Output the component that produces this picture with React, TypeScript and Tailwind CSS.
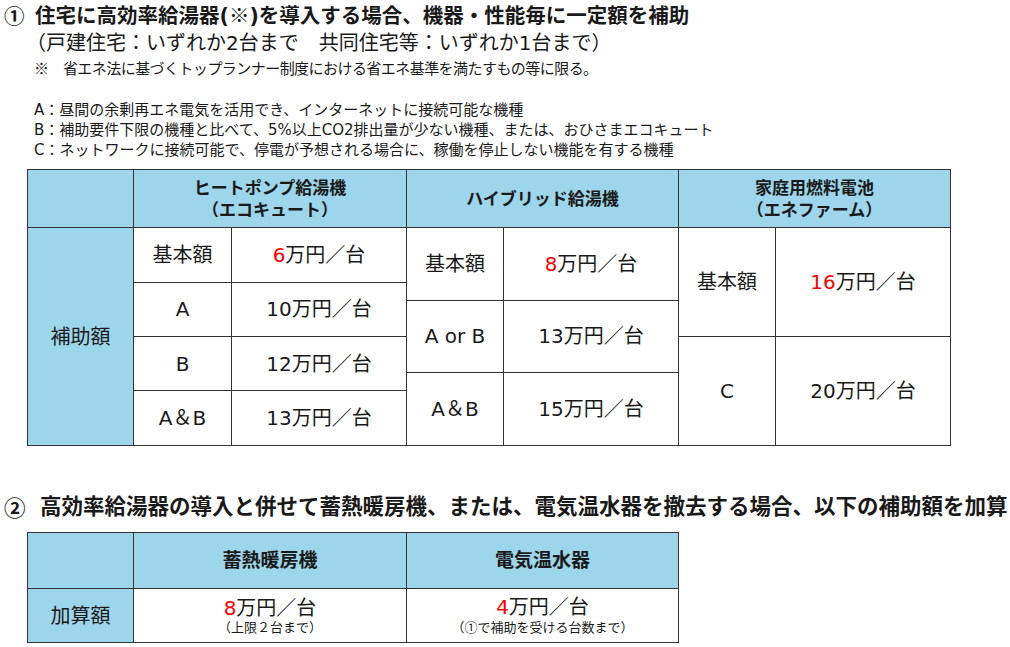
import React from "react";

const FONT = { fontFamily: '"DejaVu Sans", "Noto Sans CJK JP", sans-serif' };
const CJK = { fontFamily: '"Noto Sans CJK JP", sans-serif' };

const Red = ({ children }: { children: React.ReactNode }) => (
  <span className="text-[#ff0000]">{children}</span>
);

export default function App() {
  const cell = "bg-white flex items-center justify-center text-[20px] text-[#1a1a1a]";
  const head = "bg-[#9dd5ea] flex flex-col items-center justify-center font-bold text-[#1a1a1a]";
  return (
    <div className="w-[1010px] h-[647px] bg-white overflow-hidden text-[#1a1a1a]" style={FONT}>
      <div className="pt-[3px]">
        <div className="flex items-center h-[24px] text-[20.5px] font-bold leading-[24px]">
          <span className="w-[35px] pl-[4px]" style={CJK}>①</span>
          <span>住宅に高効率給湯器(<span style={CJK}>※</span>)を導入する場合、機器・性能毎に一定額を補助</span>
        </div>
        <div className="mt-[4px] pl-[26px] h-[24px] text-[20px] leading-[24px]">
          （戸建住宅：いずれか2台まで　共同住宅等：いずれか1台まで）
        </div>
        <div className="mt-[3px] pl-[34px] h-[20px] text-[15px] leading-[20px] tracking-[-0.55px]">
          <span style={CJK}>※</span>　省エネ法に基づくトップランナー制度における省エネ基準を満たすもの等に限る。
        </div>
        <div className="mt-[22px] pl-[34px] text-[15px] leading-[20px]">
          <div>A：昼間の余剰再エネ電気を活用でき、インターネットに接続可能な機種</div>
          <div>B：補助要件下限の機種と比べて、5%以上CO2排出量が少ない機種、または、おひさまエコキュート</div>
          <div>C：ネットワークに接続可能で、停電が予想される場合に、稼働を停止しない機能を有する機種</div>
        </div>

        <div className="mt-[9px] ml-[27px] w-fit grid grid-cols-[105px_97px_174px_96px_174px_96px_174px] grid-rows-[57px_repeat(12,minmax(0,1fr))] h-[277px] gap-px p-px bg-[#333]">
          <div className={`${head} col-start-1 row-start-1`} />
          <div className={`${head} col-start-2 col-span-2 row-start-1 text-[17px] leading-[22px]`}>
            <span>ヒートポンプ給湯機</span>
            <span>（エコキュート）</span>
          </div>
          <div className={`${head} col-start-4 col-span-2 row-start-1 text-[17px] leading-[22px]`}>
            <span>ハイブリッド給湯機</span>
          </div>
          <div className={`${head} col-start-6 col-span-2 row-start-1 text-[17px] leading-[22px]`}>
            <span>家庭用燃料電池</span>
            <span>（エネファーム）</span>
          </div>

          <div className="bg-[#9dd5ea] flex items-center justify-center text-[20px] col-start-1 row-start-2 row-span-12">補助額</div>

          <div className={`${cell} col-start-2 row-start-2 row-span-3`}>基本額</div>
          <div className={`${cell} col-start-3 row-start-2 row-span-3`}><span><Red>6</Red>万円／台</span></div>
          <div className={`${cell} col-start-2 row-start-5 row-span-3`}>A</div>
          <div className={`${cell} col-start-3 row-start-5 row-span-3`}>10万円／台</div>
          <div className={`${cell} col-start-2 row-start-8 row-span-3`}>B</div>
          <div className={`${cell} col-start-3 row-start-8 row-span-3`}>12万円／台</div>
          <div className={`${cell} col-start-2 row-start-11 row-span-3`}>A＆B</div>
          <div className={`${cell} col-start-3 row-start-11 row-span-3`}>13万円／台</div>

          <div className={`${cell} col-start-4 row-start-2 row-span-4`}>基本額</div>
          <div className={`${cell} col-start-5 row-start-2 row-span-4`}><span><Red>8</Red>万円／台</span></div>
          <div className={`${cell} col-start-4 row-start-6 row-span-4`}>A or B</div>
          <div className={`${cell} col-start-5 row-start-6 row-span-4`}>13万円／台</div>
          <div className={`${cell} col-start-4 row-start-10 row-span-4`}>A＆B</div>
          <div className={`${cell} col-start-5 row-start-10 row-span-4`}>15万円／台</div>

          <div className={`${cell} col-start-6 row-start-2 row-span-6`}>基本額</div>
          <div className={`${cell} col-start-7 row-start-2 row-span-6`}><span><Red>16</Red>万円／台</span></div>
          <div className={`${cell} col-start-6 row-start-8 row-span-6`}>C</div>
          <div className={`${cell} col-start-7 row-start-8 row-span-6`}>20万円／台</div>
        </div>

        <div className="mt-[47px] flex items-center h-[28px] text-[21.5px] font-bold leading-[28px]">
          <span className="w-[40px] pl-[4px]" style={CJK}>②</span>
          <span>高効率給湯器の導入と併せて蓄熱暖房機、または、電気温水器を撤去する場合、以下の補助額を加算</span>
        </div>

        <div className="mt-[11px] ml-[27px] w-fit grid grid-cols-[105px_272px_271px] grid-rows-[55px_53px] gap-px p-px bg-[#333]">
          <div className="bg-[#9dd5ea]" />
          <div className={`${head} text-[19px]`}>蓄熱暖房機</div>
          <div className={`${head} text-[19px]`}>電気温水器</div>
          <div className="bg-[#9dd5ea] flex items-center justify-center text-[20px]">加算額</div>
          <div className="bg-white flex flex-col items-center justify-center">
            <span className="text-[20px] leading-[24px]"><Red>8</Red>万円／台</span>
            <span className="text-[13px] leading-[16px]">（上限２台まで）</span>
          </div>
          <div className="bg-white flex flex-col items-center justify-center">
            <span className="text-[20px] leading-[24px]"><Red>4</Red>万円／台</span>
            <span className="text-[13px] leading-[16px]">（<span style={CJK}>①</span>で補助を受ける台数まで）</span>
          </div>
        </div>
      </div>
    </div>
  );
}
